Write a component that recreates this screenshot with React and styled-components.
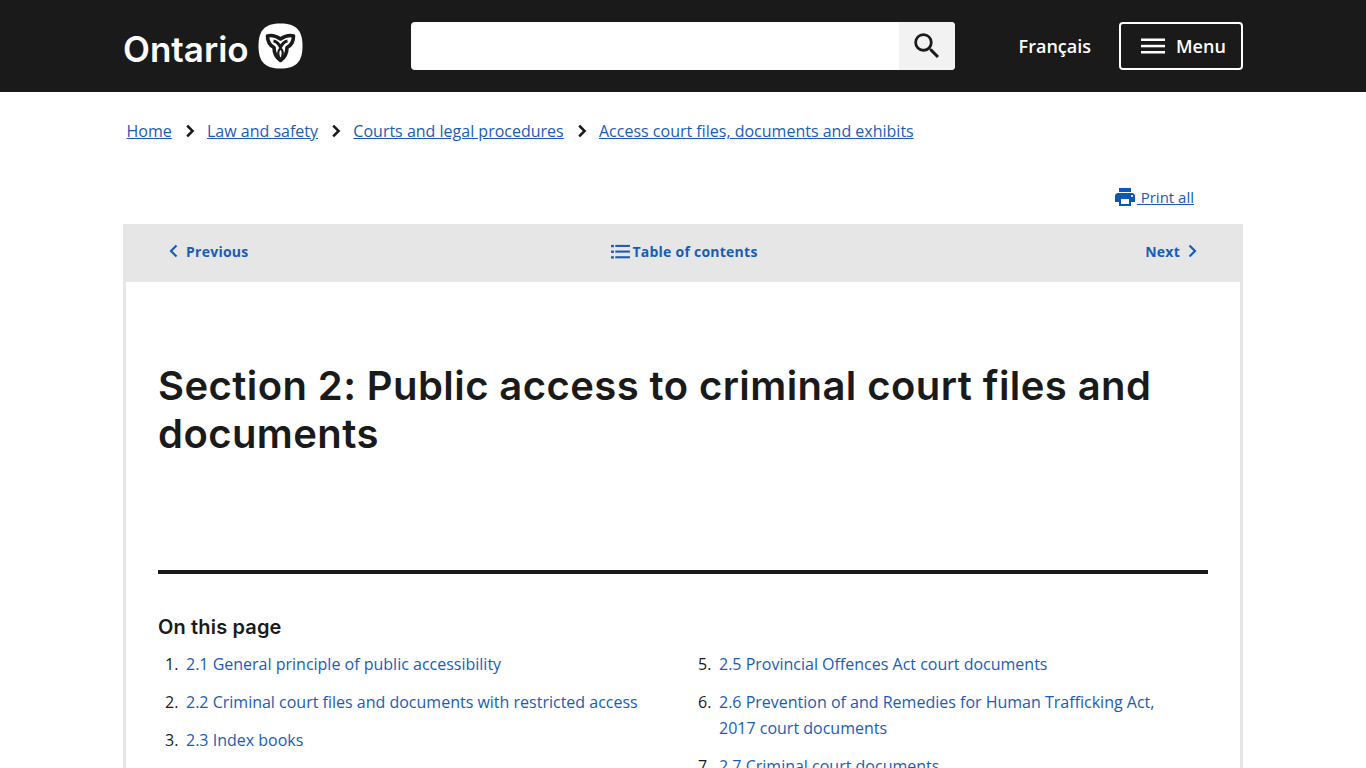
import React from 'react';
import styled, { createGlobalStyle } from 'styled-components';

const GlobalStyle = createGlobalStyle`
  html, body {
    margin: 0;
    padding: 0;
    height: 768px;
    overflow: hidden;
    background: #fff;
    font-family: 'Open Sans', sans-serif;
    color: #1a1a1a;
  }
`;

const Header = styled.header`
  height: 92px;
  background: #1a1a1a;
`;

const HeaderInner = styled.div`
  width: 1120px;
  height: 100%;
  margin: 0 auto;
  display: flex;
  align-items: center;
`;

const Logo = styled.a`
  width: 288px;
  display: flex;
  align-items: center;
  gap: 9px;
  color: #fff;
  font-family: 'Inter', sans-serif;
  font-weight: 600;
  font-size: 35px;
`;

const LogoText = styled.span`
  margin-top: 5px;
`;

const SearchBox = styled.div`
  width: 544px;
  height: 48px;
  display: flex;
  background: #fff;
  border-radius: 4px;
  overflow: hidden;
`;

const SearchInput = styled.div`
  flex: 1;
`;

const SearchButton = styled.div`
  width: 56px;
  display: flex;
  align-items: center;
  justify-content: center;
  background: #f2f2f2;
`;

const Lang = styled.a`
  margin-left: auto;
  margin-right: 28px;
  color: #fff;
  font-weight: 600;
  font-size: 18px;
`;

const MenuButton = styled.div`
  box-sizing: border-box;
  width: 124px;
  height: 48px;
  padding-left: 20px;
  display: flex;
  align-items: center;
  gap: 11px;
  border: 2px solid #fff;
  border-radius: 4px;
  color: #fff;
  font-weight: 600;
  font-size: 18px;
`;

const Main = styled.main`
  width: 1120px;
  margin: 0 auto;
`;

const Crumbs = styled.nav`
  display: flex;
  align-items: center;
  height: 26px;
  margin-top: 26px;
  padding-left: 3.5px;
  font-size: 16px;
`;

const Crumb = styled.a`
  color: #1a5bb8;
  text-decoration: underline;
`;

const CrumbArrow = styled.svg`
  width: 35.3px;
  height: 14px;
`;

const PrintRow = styled.div`
  display: flex;
  justify-content: flex-end;
  margin-top: 41px;
  padding-right: 49px;
  height: 24px;
  line-height: 24px;
`;

const PrintLink = styled.a`
  display: flex;
  align-items: center;
  color: #1a5bb8;
  font-size: 15px;
  text-decoration: underline;
  white-space: pre;
`;

const PrintIcon = styled.svg`
  margin-right: 2px;
`;

const Panel = styled.section`
  margin-top: 15px;
  box-sizing: border-box;
  height: 600px;
  border: solid #e6e6e6;
  border-width: 0 3px;
`;

const PagerBar = styled.div`
  box-sizing: border-box;
  height: 58px;
  margin: 0 -3px;
  background: #e6e6e6;
  display: grid;
  grid-template-columns: 1fr 1fr 1fr;
  align-items: center;
  padding: 0 46px 4px;
  color: #1a5bb8;
  font-size: 14px;
  font-weight: 700;
  letter-spacing: 0.25px;
`;

const PagerLink = styled.a`
  display: flex;
  align-items: center;
  gap: ${(p) => p.$gap || 8}px;
  justify-content: ${(p) => p.$justify || 'flex-start'};
`;

const TocLink = styled(PagerLink)`
  padding-left: 3px;
`;

const Body = styled.div`
  padding: 80px 32px 0;
`;

const Title = styled.h1`
  margin: 0;
  height: 208px;
  border-bottom: 4px solid #1a1a1a;
  font-family: 'Inter', sans-serif;
  font-weight: 600;
  font-size: 40px;
  letter-spacing: 0.42px;
  line-height: 48px;
  color: #1a1a1a;
`;

const OnThisPage = styled.h2`
  margin: 39px 0 10px;
  font-family: 'Inter', sans-serif;
  font-weight: 600;
  font-size: 20px;
  letter-spacing: 0.15px;
  line-height: 28px;
  color: #1a1a1a;
`;

const Columns = styled.div`
  display: grid;
  grid-template-columns: 1fr 1fr;
  column-gap: 16px;
  font-size: 16px;
  line-height: 26px;
`;

const List = styled.ol`
  margin: 0;
  padding: 0;
  list-style: none;
`;

const Item = styled.li`
  display: flex;
  margin-bottom: 12px;
  padding-right: 32px;
`;

const Num = styled.span`
  flex: 0 0 28px;
  box-sizing: border-box;
  padding-left: 7px;
`;

const ItemLink = styled.a`
  color: #1a5bb8;
`;

const leftItems = [
  [1, '2.1 General principle of public accessibility'],
  [2, '2.2 Criminal court files and documents with restricted access'],
  [3, '2.3 Index books'],
];

const rightItems = [
  [5, '2.5 Provincial Offences Act court documents'],
  [6, '2.6 Prevention of and Remedies for Human Trafficking Act, 2017 court documents'],
  [7, '2.7 Criminal court documents'],
];

function Chevron({ dir = 'right' }) {
  return (
    <svg width="9" height="14" viewBox="0 0 9 14" fill="none" stroke="#1a5bb8" strokeWidth="2.2">
      <path d={dir === 'right' ? 'M1.5 1.5 7 7l-5.5 5.5' : 'M7.5 1.5 2 7l5.5 5.5'} />
    </svg>
  );
}

function CrumbChevron() {
  return (
    <CrumbArrow viewBox="0 0 36 14" fill="none" stroke="#1a1a1a" strokeWidth="2.6">
      <path d="M15.500 1.500 21 7l-5.500 5.500" />
    </CrumbArrow>
  );
}

function Trillium() {
  return (
    <svg width="45" height="46" viewBox="0 0 45 46">
      <path d="M22.500.5C38 .5 44.500 7 44.500 23S38 45.500 22.500 45.500.5 39 .5 23 7 .5 22.500.5Z" fill="#fff" />
      <g fill="none" stroke="#1a1a1a" strokeLinejoin="round">
        <path
          d="M22.500 16C18 13 13 12 9.500 13c0 5.500 2.500 9.500 6.500 11.500 0 5.500 3 10.500 6.500 13 3.500-2.500 6.500-7.500 6.500-13 4-2 6.500-6 6.500-11.500-3.500-1-8.500 0-13 3Z"
          strokeWidth="3.600"
        />
        <path d="M22.500 25c-3 3-3 7.500 0 12 3-4.500 3-9 0-12Z" strokeWidth="2.200" />
        <path d="M15.500 18c3.500.5 5.500 3 7 6.500 1.500-3.500 3.500-6 7-6.500" strokeWidth="2.800" />
      </g>
    </svg>
  );
}

export default function App() {
  return (
    <>
      <GlobalStyle />
      <Header>
        <HeaderInner>
          <Logo>
            <LogoText>Ontario</LogoText>
            <Trillium />
          </Logo>
          <SearchBox>
            <SearchInput />
            <SearchButton>
              <svg width="34" height="34" viewBox="0 0 24 24" fill="#1a1a1a">
                <path d="M15.500 14h-.79l-.28-.27A6.470 6.470 0 0 0 16 9.500 6.500 6.500 0 1 0 9.500 16c1.610 0 3.090-.59 4.230-1.570l.27.28v.79l5 4.990L20.490 19l-4.990-5Zm-6 0C7.010 14 5 11.990 5 9.500S7.010 5 9.500 5 14 7.010 14 9.500 11.990 14 9.500 14Z" />
              </svg>
            </SearchButton>
          </SearchBox>
          <Lang>Français</Lang>
          <MenuButton>
            <svg width="24" height="16" viewBox="0 0 24 16" fill="#fff">
              <rect width="24" height="2.500" y="0.500" />
              <rect width="24" height="2.500" y="6.800" />
              <rect width="24" height="2.500" y="13" />
            </svg>
            Menu
          </MenuButton>
        </HeaderInner>
      </Header>
      <Main>
        <Crumbs>
          <Crumb>Home</Crumb>
          <CrumbChevron />
          <Crumb>Law and safety</Crumb>
          <CrumbChevron />
          <Crumb>Courts and legal procedures</Crumb>
          <CrumbChevron />
          <Crumb>Access court files, documents and exhibits</Crumb>
        </Crumbs>
        <PrintRow>
          <PrintLink>
            <PrintIcon width="20" height="18" viewBox="2 3 20 18" fill="#0a5ab5">
              <path d="M19 8H5c-1.660 0-3 1.340-3 3v6h4v4h12v-4h4v-6c0-1.660-1.340-3-3-3Zm-3 11H8v-5h8v5Zm3-7c-.55 0-1-.45-1-1s.45-1 1-1 1 .45 1 1-.45 1-1 1Zm-1-9H6v4h12V3Z" />
            </PrintIcon>
            {' Print all'}
          </PrintLink>
        </PrintRow>
        <Panel>
          <PagerBar>
            <PagerLink>
              <Chevron dir="left" />
              Previous
            </PagerLink>
            <TocLink $gap={2} $justify="center">
              <svg width="19" height="17" viewBox="0 0 20 18" fill="#1a5bb8">
                <rect x="0" y="2" width="3" height="2.500" />
                <rect x="0" y="8" width="3" height="2.500" />
                <rect x="0" y="14" width="3" height="2.500" />
                <rect x="4.500" y="2" width="15.500" height="2.200" />
                <rect x="4.500" y="8" width="15.500" height="2.200" />
                <rect x="4.500" y="14" width="15.500" height="2.200" />
              </svg>
              Table of contents
            </TocLink>
            <PagerLink $justify="flex-end">
              Next
              <Chevron />
            </PagerLink>
          </PagerBar>
          <Body>
            <Title>Section 2: Public access to criminal court files and documents</Title>
            <OnThisPage>On this page</OnThisPage>
            <Columns>
              <List>
                {leftItems.map(([n, text]) => (
                  <Item key={n}>
                    <Num>{n}.</Num>
                    <ItemLink>{text}</ItemLink>
                  </Item>
                ))}
              </List>
              <List>
                {rightItems.map(([n, text]) => (
                  <Item key={n}>
                    <Num>{n}.</Num>
                    <ItemLink>{text}</ItemLink>
                  </Item>
                ))}
              </List>
            </Columns>
          </Body>
        </Panel>
      </Main>
    </>
  );
}
